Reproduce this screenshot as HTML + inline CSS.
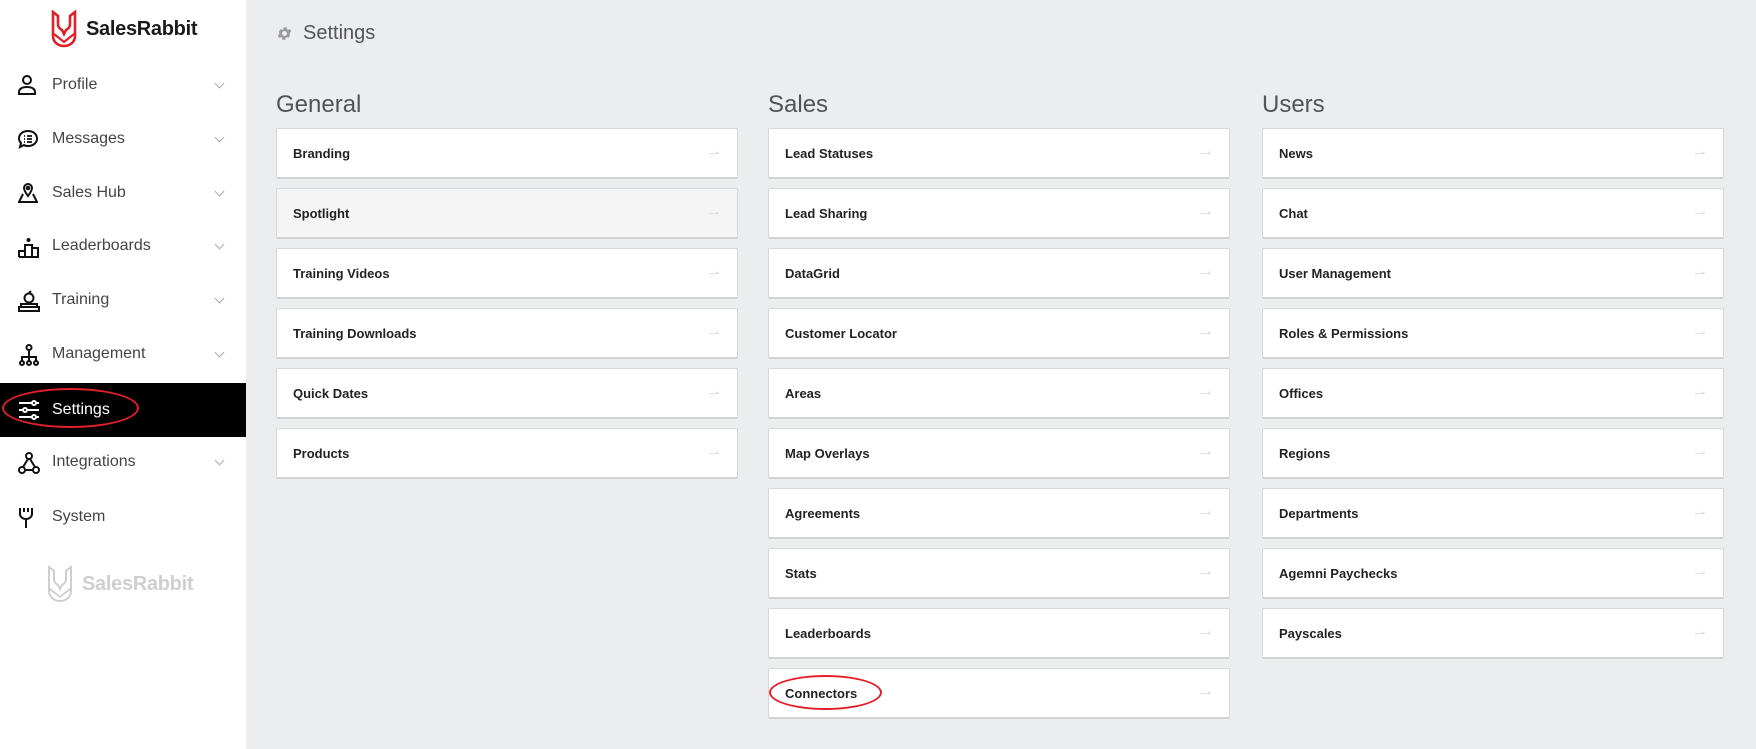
<!DOCTYPE html>
<html><head><meta charset="utf-8"><style>
*{box-sizing:border-box;margin:0;padding:0}
body{width:1756px;height:749px;background:#ecedef;font-family:"Liberation Sans",Arial,sans-serif;position:relative;overflow:hidden}
.side{position:absolute;left:0;top:0;width:246px;height:749px;background:#fff}
.logo{position:absolute;left:51px;top:10px;display:flex;align-items:center}
.logo span{font-weight:bold;font-size:20px;color:#1a1a1a;margin-left:9px;letter-spacing:-0.3px}
.nav{position:absolute;left:0;width:246px;height:54px;display:flex;align-items:center}
.nav svg{position:absolute;left:18px;top:17px}
.nav .t{position:absolute;left:52px;font-size:16px;color:#444}
.nav .ch{position:absolute;left:216px;top:22px;width:7px;height:7px;border-right:1px solid #aaa;border-bottom:1px solid #aaa;transform:rotate(45deg)}
.nav.act{background:#000}
.nav.act .t{color:#fff}
.hdr{position:absolute;left:276px;top:22px;display:flex;align-items:center;font-size:20px;color:#555}
.h2{position:absolute;font-size:24px;color:#50545a;top:91px}
.card{position:absolute;width:462px;height:51px;background:#fff;border:1px solid #d8d8d8;border-bottom:2px solid #d2d3d5;border-radius:2px}
.card b{position:absolute;left:16px;top:17px;font-size:13px;color:#222}
.card i{position:absolute;right:18px;top:24px;width:10px;height:1px;background:#e2e2e2}
.card i:after{content:"";position:absolute;right:0;top:-2px;border-left:3px solid #e2e2e2;border-top:2.5px solid transparent;border-bottom:2.5px solid transparent}
.ell{position:absolute;border:2px solid #e3202a;border-radius:50%}
</style></head><body>
<div class="side">
 <div class="logo">
  <svg width="26" height="38" viewBox="0 0 26 38"><path d="M2 2v24c0 6 5 10 11 10s11-4 11-10V2l-5 4v8c0 3-2 5-4 6l-2 4-2-4c-2-1-4-3-4-6V6z" fill="none" stroke="#e3202a" stroke-width="2.6"/><path d="M3 24l10 8 10-8" fill="none" stroke="#e3202a" stroke-width="2.2"/></svg>
  <span>SalesRabbit</span>
 </div>
 <div class="nav" style="top:58px"><svg width="18" height="20" viewBox="0 0 18 20" fill="none" stroke="#111" stroke-width="2"><circle cx="9" cy="5" r="4"/><path d="M1 19v-2c0-3 3-5 8-5s8 2 8 5v2z"/></svg><span class="t">Profile</span><span class="ch"></span></div>
 <div class="nav" style="top:112px"><svg width="20" height="20" viewBox="0 0 20 20" fill="none" stroke="#111" stroke-width="2"><path d="M10 2c5 0 9 3 9 7.5S15 17 10 17c-2 0-3 0-4-1l-4 2 1-4C2 13 1 11 1 9.5 1 5 5 2 10 2z"/><path d="M6 7h1M6 10h1M6 13h1M9 7h5M9 10h5M9 13h5" stroke-width="1.8"/></svg><span class="t">Messages</span><span class="ch"></span></div>
 <div class="nav" style="top:166px"><svg width="20" height="20" viewBox="0 0 20 20" fill="none" stroke="#111" stroke-width="2"><path d="M10 13c-3-4-4-6-4-8a4 4 0 018 0c0 2-1 4-4 8z"/><circle cx="10" cy="5" r="1.3"/><path d="M5 11L1 19h18l-4-8"/></svg><span class="t">Sales Hub</span><span class="ch"></span></div>
 <div class="nav" style="top:219px"><svg width="22" height="22" viewBox="0 0 22 22" fill="none" stroke="#111" stroke-width="2"><path d="M1 21v-6h6v6M7 21V9h7v12M14 21v-9h6v9zM1 21h20"/><circle cx="10.5" cy="4" r="1" fill="#111"/></svg><span class="t">Leaderboards</span><span class="ch"></span></div>
 <div class="nav" style="top:273px"><svg width="22" height="22" viewBox="0 0 22 22" fill="none" stroke="#111" stroke-width="2"><circle cx="11" cy="8" r="4.5"/><path d="M11 3l2-2M3 14h16v3H3zM1 17h20v4H1z"/></svg><span class="t">Training</span><span class="ch"></span></div>
 <div class="nav" style="top:327px"><svg width="22" height="22" viewBox="0 0 22 22" fill="none" stroke="#111" stroke-width="2"><circle cx="11" cy="3.5" r="2.5"/><path d="M11 6v5M4 17v-4h14v4M11 11v6"/><circle cx="4" cy="19" r="2"/><circle cx="11" cy="19" r="2"/><circle cx="18" cy="19" r="2"/></svg><span class="t">Management</span><span class="ch"></span></div>
 <div class="nav act" style="top:383px"><svg width="22" height="20" viewBox="0 0 22 20" fill="none" stroke="#fff" stroke-width="2"><path d="M1 3h13M18 3h3M1 10h4M9 10h12M1 17h13M18 17h3"/><circle cx="16" cy="3" r="2"/><circle cx="7" cy="10" r="2"/><circle cx="16" cy="17" r="2"/></svg><span class="t">Settings</span></div>
 <div class="nav" style="top:435px"><svg width="22" height="22" viewBox="0 0 22 22" fill="none" stroke="#111" stroke-width="2"><circle cx="11" cy="4" r="3"/><circle cx="4" cy="18" r="3"/><circle cx="18" cy="18" r="3"/><path d="M10 7l-5 8M12 7l5 8M7 18h8"/></svg><span class="t">Integrations</span><span class="ch"></span></div>
 <div class="nav" style="top:490px"><svg width="16" height="22" viewBox="0 0 16 22" fill="none" stroke="#111" stroke-width="2"><path d="M2 1v6c0 3 3 5 6 5s6-2 6-5V1M6 1v4M10 1v4M8 12v9"/></svg><span class="t">System</span></div>
 <div class="logo" style="left:47px;top:565px;opacity:.35;filter:grayscale(1)">
  <svg width="26" height="38" viewBox="0 0 26 38"><path d="M2 2v24c0 6 5 10 11 10s11-4 11-10V2l-5 4v8c0 3-2 5-4 6l-2 4-2-4c-2-1-4-3-4-6V6z" fill="none" stroke="#777" stroke-width="2"/><path d="M3 24l10 8 10-8" fill="none" stroke="#777" stroke-width="1.8"/></svg>
  <span style="color:#777">SalesRabbit</span>
 </div>
</div>
<div class="ell" style="left:2px;top:388px;width:137px;height:40px"></div>

<div class="hdr"><svg width="17" height="17" viewBox="0 0 24 24"><path fill="#9a9a9a" d="M19.4 13a7.5 7.5 0 000-2l2.1-1.6-2-3.5-2.5 1a7.5 7.5 0 00-1.7-1l-.4-2.7h-4l-.4 2.7a7.5 7.5 0 00-1.7 1l-2.5-1-2 3.5L4.6 11a7.5 7.5 0 000 2l-2.1 1.6 2 3.5 2.5-1a7.5 7.5 0 001.7 1l.4 2.7h4l.4-2.7a7.5 7.5 0 001.7-1l2.5 1 2-3.5zM12 15.5a3.5 3.5 0 110-7 3.5 3.5 0 010 7z"/></svg><span style="margin-left:10px">Settings</span></div>

<div class="h2" style="left:276px">General</div>
<div class="h2" style="left:768px">Sales</div>
<div class="h2" style="left:1262px">Users</div>

<div class="card" style="left:276px;top:128px"><b>Branding</b><i></i></div>
<div class="card" style="left:276px;top:188px;background:#f5f5f5"><b>Spotlight</b><i></i></div>
<div class="card" style="left:276px;top:248px"><b>Training Videos</b><i></i></div>
<div class="card" style="left:276px;top:308px"><b>Training Downloads</b><i></i></div>
<div class="card" style="left:276px;top:368px"><b>Quick Dates</b><i></i></div>
<div class="card" style="left:276px;top:428px"><b>Products</b><i></i></div>

<div class="card" style="left:768px;top:128px"><b>Lead Statuses</b><i></i></div>
<div class="card" style="left:768px;top:188px"><b>Lead Sharing</b><i></i></div>
<div class="card" style="left:768px;top:248px"><b>DataGrid</b><i></i></div>
<div class="card" style="left:768px;top:308px"><b>Customer Locator</b><i></i></div>
<div class="card" style="left:768px;top:368px"><b>Areas</b><i></i></div>
<div class="card" style="left:768px;top:428px"><b>Map Overlays</b><i></i></div>
<div class="card" style="left:768px;top:488px"><b>Agreements</b><i></i></div>
<div class="card" style="left:768px;top:548px"><b>Stats</b><i></i></div>
<div class="card" style="left:768px;top:608px"><b>Leaderboards</b><i></i></div>
<div class="card" style="left:768px;top:668px"><b>Connectors</b><i></i></div>

<div class="card" style="left:1262px;top:128px"><b>News</b><i></i></div>
<div class="card" style="left:1262px;top:188px"><b>Chat</b><i></i></div>
<div class="card" style="left:1262px;top:248px"><b>User Management</b><i></i></div>
<div class="card" style="left:1262px;top:308px"><b>Roles &amp; Permissions</b><i></i></div>
<div class="card" style="left:1262px;top:368px"><b>Offices</b><i></i></div>
<div class="card" style="left:1262px;top:428px"><b>Regions</b><i></i></div>
<div class="card" style="left:1262px;top:488px"><b>Departments</b><i></i></div>
<div class="card" style="left:1262px;top:548px"><b>Agemni Paychecks</b><i></i></div>
<div class="card" style="left:1262px;top:608px"><b>Payscales</b><i></i></div>

<div class="ell" style="left:769px;top:675px;width:113px;height:35px"></div>
</body></html>
